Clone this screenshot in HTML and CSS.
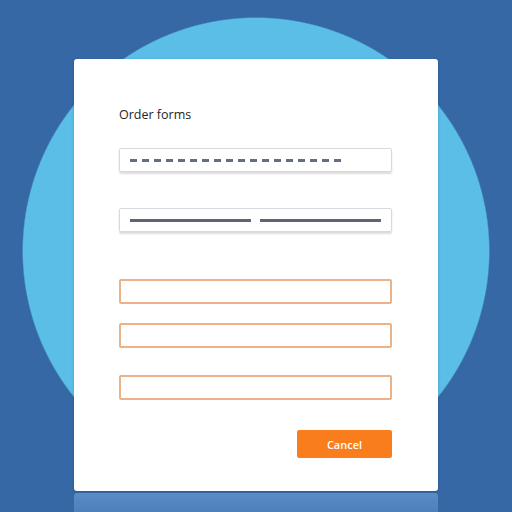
FILE: index.html
```html
<!DOCTYPE html>
<html>
    <head>
        <title>Order forms</title>
        <link rel="stylesheet" href="styles.css">
    </head>
    <body>
        <div class="card">
            <h1 class="title">Order forms</h1>
            <div class="field filled">
                <span class="dashes"></span>
            </div>
            <div class="field filled split">
                <span class="line"></span>
                <span class="line"></span>
            </div>
            <div class="field empty first"></div>
            <div class="field empty"></div>
            <div class="field empty last"></div>
            <div class="actions">
                <button type="button" class="btn">Cancel</button>
            </div>
        </div>
        <div class="reflection"></div>
    </body>
</html>
```

FILE: styles.css
```css
:root {
    --bg-dark: #3668a6;
    --bg-circle: #5bbee7;
    --orange: #f97d1c;
    --orange-border: #eeb088;
    --ink: #5b6577;
}

html, body {
    height: 100%;
}
body {
    margin: 0;
    padding-top: 59px;
    box-sizing: border-box;
    overflow: hidden;
    font-family: "Open Sans", "Liberation Sans", sans-serif;
    background: radial-gradient(circle 234px at 256px 251px, var(--bg-circle) 99.4%, var(--bg-dark) 100%);
    background-color: var(--bg-dark);
}

.card {
    width: 364px;
    height: 432px;
    margin: 0 auto;
    box-sizing: border-box;
    padding: 48px 46px 0 45px;
    background: #fff;
    border-radius: 3px;
    box-shadow: 0 1px 3px rgba(20, 50, 90, 0.25);
}
.title {
    margin: 0 0 25px;
    font-size: 12.5px;
    line-height: 16px;
    font-weight: 400;
    color: #1e1e1e;
}

.field {
    height: 25px;
    box-sizing: border-box;
}
.field.filled {
    height: 24px;
    margin-bottom: 36px;
    border: 1px solid #d6d9de;
    border-radius: 2px;
    box-shadow: 0 2px 2px rgba(0, 0, 0, 0.14);
    display: flex;
    align-items: center;
    padding: 0 10px;
}
.field.filled.split {
    margin-bottom: 47px;
    gap: 9px;
}
.dashes {
    width: 213px;
    height: 3px;
    background: repeating-linear-gradient(to right, #646e80 0 7px, transparent 7px 12px);
}
.line {
    flex: 1;
    height: 3px;
    background: var(--ink);
}

.field.empty {
    border: 2px solid var(--orange-border);
    border-radius: 2px;
    margin-bottom: 19px;
}
/* sibling margins collapse, so the bigger gap goes on top of the last one */
.field.empty.last {
    margin-top: 27px;
    margin-bottom: 30px;
}

.actions {
    display: flex;
    justify-content: flex-end;
}
.btn {
    width: 95px;
    height: 28px;
    border: none;
    border-radius: 2px;
    background: var(--orange);
    color: #fff;
    font-family: inherit;
    font-size: 11px;
    font-weight: 600;
}

.reflection {
    width: 364px;
    height: 30px;
    margin: 2px auto 0;
    background: linear-gradient(#5a8cc6, #4678b6);
    border-radius: 3px 3px 0 0;
}
```
